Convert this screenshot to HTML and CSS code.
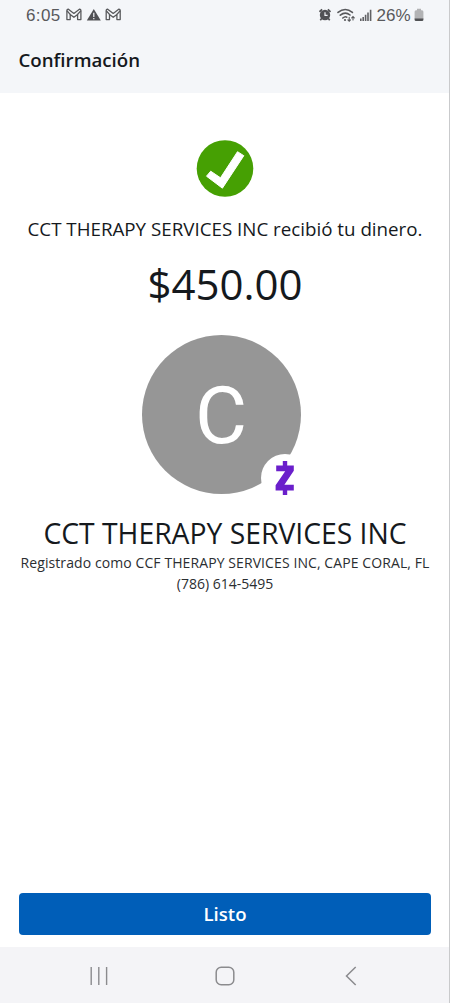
FILE: index.html
```html
<!DOCTYPE html>
<html lang="es">
<head>
<meta charset="utf-8">
<title>Confirmación</title>
<link rel="stylesheet" href="styles.css">
</head>
<body>
<div class="screen">
  <header class="top">
    <div class="status">
      <span class="clock">6:05</span>
      <svg class="notices" width="56" height="16" viewBox="0 0 56 16">
        <g id="mail" fill="none" stroke="#58595c" stroke-width="1.3" stroke-linejoin="round">
          <path d="M.9 3.4Q.9 2 2.4 2.2L7.9 6.4 13.4 2.2Q14.9 2 14.9 3.4V12.6H11.6V7.4L7.9 10.3 4.2 7.4V12.6H.9Z"/>
          <path d="M.9 3.7 4.2 7.4M14.9 3.7 11.6 7.4"/>
        </g>
        <path d="M27.8 2 34.8 13.6H20.8Z" fill="#505154"/>
        <path d="M27.8 5.8V10M27.8 11V12.3" stroke="#f4f6f9" stroke-width="1.2"/>
        <use href="#mail" x="39.3"/>
      </svg>
      <svg class="signals" width="54" height="18" viewBox="0 0 54 18">
        <g fill="none" stroke="#505154" stroke-width="1.7">
          <circle cx="6" cy="9" r="5.2" fill="#505154" stroke="none"/>
          <path d="M.5 5.8 3.1 3.3M8.9 3.3 11.5 5.8M2.8 12.3 1.3 14.2M9.2 12.3 10.7 14.2"/>
          <path d="M6 6.2V9.4H8.6" stroke="#f4f6f9" stroke-width="1.2"/>
        </g>
        <g fill="none" stroke="#58595c" stroke-width="1.6" stroke-linecap="round">
          <path d="M19 6.4Q26.3.6 33.4 6.4M21.3 9.2Q26.3 5 31 9M23.8 12Q26.3 9.9 27.7 11.2"/>
          <path d="M30.2 11.2V15M28.9 13.8 30.2 15.2 31.5 13.8M34 14V10.8M32.7 11.8 34 10.5 35.3 11.8" stroke-width="1.1"/>
        </g>
        <circle cx="26" cy="14" r="1.1" fill="#58595c"/>
        <path d="M41.8 15V12.6M44.2 15V11M46.6 15V8.8M49 15V6.4M51.6 15V3.8" stroke="#606164" stroke-width="1.6"/>
      </svg>
      <span class="percent">26%</span>
      <svg class="battery" width="10" height="14" viewBox="0 0 10 14">
        <path d="M3 .8H7V2.2H8Q9.4 2.2 9.4 3.7V11H.6V3.7Q.6 2.2 2 2.2H3Z" fill="#b2b3b5"/>
        <path d="M.6 10.4H9.4V11.7Q9.4 13 8 13H2Q.6 13 .6 11.7Z" fill="#505154"/>
      </svg>
    </div>
    <h1 class="title">Confirmación</h1>
  </header>
  <main class="content">
    <svg class="check" width="58" height="58" viewBox="0 0 58 58">
      <circle cx="29" cy="28.5" r="28.3" fill="#46a003"/>
      <path d="M10.5 36.2 14.7 31.2 24.5 37.8 41.5 11.7 47.8 15.7 26.4 48.2Z" fill="#fff" stroke="#fff" stroke-linejoin="round"/>
    </svg>
    <p class="message">CCT THERAPY SERVICES INC recibió tu dinero.</p>
    <p class="amount">$450.00</p>
    <div class="avatar">
      <span class="initial">C</span>
      <div class="badge">
        <svg width="20" height="34" viewBox="0 0 20 34">
          <path d="M1.2 4.6H18.8V9.8L9.4 23.8H18.8V29.4H.6V24.2L10.2 10.2H1.2ZM7.8 0H12.2V6H7.8ZM7.8 28H12.2V34H7.8Z" fill="#6a1fcb"/>
        </svg>
      </div>
    </div>
    <h2 class="name">CCT THERAPY SERVICES INC</h2>
    <p class="detail registered">Registrado como CCF THERAPY SERVICES INC, CAPE CORAL, FL</p>
    <p class="detail phone">(786) 614-5495</p>
    <button class="done">Listo</button>
  </main>
  <nav class="nav">
    <svg width="18" height="20" viewBox="0 0 18 20"><path d="M1.2 1V19M8.8 1V19M16.6 1V19" stroke="#8b8b8e" stroke-width="1.4"/></svg>
    <svg class="home" width="20" height="20" viewBox="0 0 20 20"><rect x="1.2" y="1.3" width="17.6" height="17.4" rx="5" fill="none" stroke="#8b8b8e" stroke-width="1.5"/></svg>
    <svg width="12" height="20" viewBox="0 0 12 20"><path d="M10.7 1 1.5 10 10.7 19" fill="none" stroke="#8b8b8e" stroke-width="1.5"/></svg>
  </nav>
</div>
</body>
</html>
```
FILE: styles.css
```css
* { box-sizing: border-box; }
body { margin: 0; background: #fff; font-family: "Open Sans", sans-serif; color: #15191d; }
h1, h2, p { margin: 0; font-weight: 400; white-space: nowrap; }
svg { display: block; flex: none; }
.screen { width: 450px; height: 1003px; display: flex; flex-direction: column; border-right: 1px solid #c9cacc; overflow: hidden; }
.top { height: 93px; flex: none; background: #f4f6f9; }
.status { height: 30px; padding-left: 26px; display: flex; align-items: center; font-family: "Liberation Sans", sans-serif; color: #58595c; }
.clock { width: 40px; padding-top: 2px; font-size: 17px; letter-spacing: 0.4px; }
.signals { margin-left: 197px; }
.percent { width: 36px; margin-left: 3.5px; padding-top: 2px; font-size: 17px; }
.battery { margin-left: 1.5px; }
.title { margin: 18px 0 0 18.5px; font-size: 18.7px; line-height: 24px; font-weight: 600; }
.content { flex: 1; display: flex; flex-direction: column; align-items: center; padding: 47px 17px 12px 18px; }
.message { margin-top: 19px; font-size: 18.75px; line-height: 24px; }
.amount { margin-top: 14px; font-size: 42px; line-height: 58px; }
.avatar { position: relative; width: 159px; height: 159px; margin: 22px 8px 0 0; border-radius: 50%; background: #969696; display: flex; align-items: center; justify-content: center; }
.initial { padding-top: 2px; font: 400 80px/80px Roboto, sans-serif; color: #fff; }
.badge { position: absolute; left: 119px; top: 119px; width: 48px; height: 48px; border-radius: 50%; background: #fff; display: flex; align-items: center; justify-content: center; }
.name { margin-top: 19px; font-size: 28.3px; line-height: 40px; }
.detail { font-size: 14px; line-height: 20px; color: #2b2e31; }
.registered { letter-spacing: 0.09px; }
.phone { margin-top: 1px; }
.done { width: 412px; height: 42px; flex: none; margin-top: auto; border: 0; border-radius: 4px; background: #005eb8; color: #fff; font: 600 18.6px/24px "Open Sans", sans-serif; }
.nav { height: 56px; flex: none; padding: 1px 92px 0 90px; background: #f4f4f7; display: flex; align-items: center; justify-content: space-between; }
.home { margin-right: 4px; }
```
